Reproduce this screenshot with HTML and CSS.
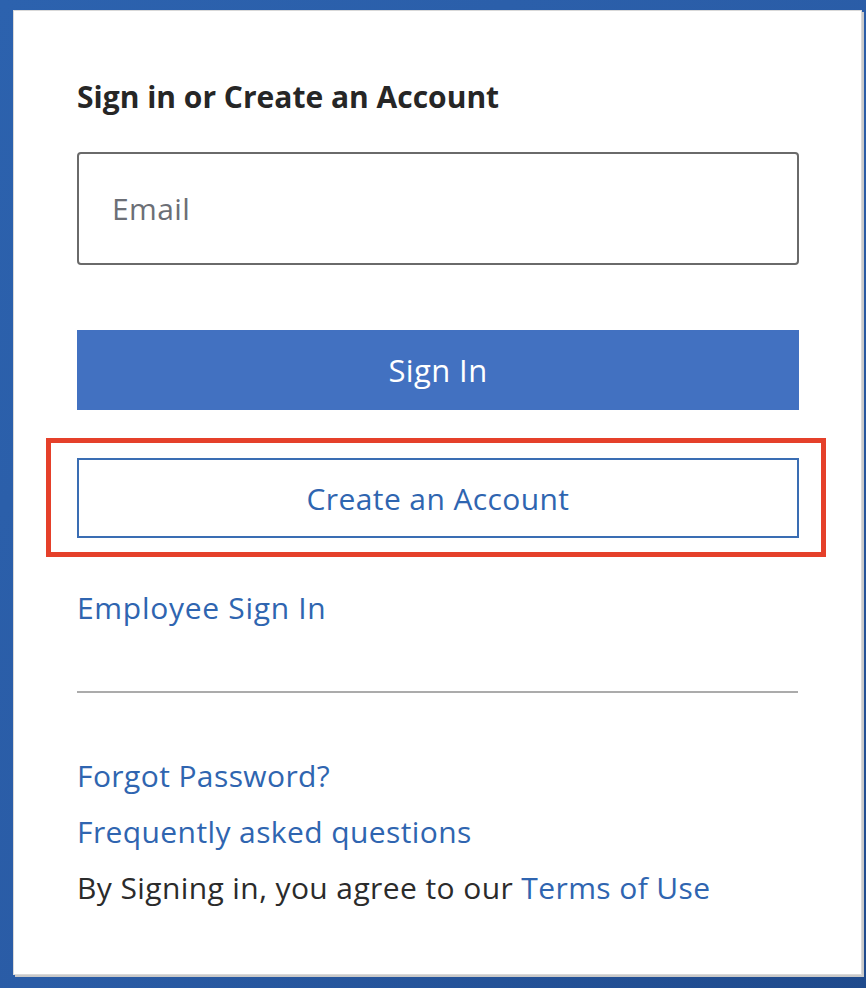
FILE: index.html
```html
<!DOCTYPE html>
<html lang="en">
<head>
    <meta charset="UTF-8">
    <meta name="viewport" content="width=device-width, initial-scale=1.0">
    <title>Sign In</title>
    <link rel="stylesheet" href="styles.css">
</head>
<body>
    <div class="card">
        <h2 class="title">Sign in or Create an Account</h2>
        <input type="email" class="email-input" placeholder="Email">
        <button class="btn-primary">Sign In</button>
        <div class="highlight">
            <button class="btn-outline">Create an Account</button>
        </div>
        <a href="#" class="link employee-link">Employee Sign In</a>
        <hr class="divider">
        <ul class="help-links">
            <li><a href="#" class="link">Forgot Password?</a></li>
            <li><a href="#" class="link">Frequently asked questions</a></li>
            <li>By Signing in, you agree to our <a href="#" class="link">Terms of Use</a></li>
        </ul>
    </div>
</body>
</html>
```

FILE: styles.css
```css
body {
    margin: 0;
    height: 988px;
    overflow: hidden;
    font-family: 'Open Sans', 'Noto Sans', sans-serif;
    background: linear-gradient(135deg, #2c62ae 0%, #2a5ca6 55%, #1f4a8c 100%); /* Textured blue */
}

.card {
    box-sizing: border-box;
    width: 849px;
    height: 965px;
    margin: 10px 0 0 13px;
    padding: 0 63px 0 63px;
    background-color: #ffffff;
    border: 1px solid #d9d9d9;
    box-shadow: 2px 2px 0 #c9c9c9;
    display: flex;
    flex-direction: column;
}

.title {
    margin: 66px 0 0 0;
    font-size: 30px;
    line-height: 40px;
    font-weight: 700;
    color: #262626;
}

.email-input {
    box-sizing: border-box;
    margin-top: 35px;
    width: 722px;
    height: 113px;
    padding: 0 33px;
    border: 2px solid #6a6a6a;
    border-radius: 4px;
    font-family: inherit;
    font-size: 30px;
    letter-spacing: 0.4px;
    color: #333;
    outline: none;
}

.email-input::placeholder {
    color: #6c6f76;
}

.btn-primary {
    margin-top: 65px;
    height: 80px;
    width: 722px;
    border: none;
    background-color: #4271c1; /* Brand blue */
    color: #ffffff;
    font-family: inherit;
    font-size: 31px;
    letter-spacing: 0.4px;
    cursor: pointer;
}

.highlight {
    margin: 28px -28px 0 -31px;
    padding: 15px 23px 14px 26px;
    border: 5px solid #e5402a; /* Red marker */
}

.btn-outline {
    display: block;
    width: 722px;
    height: 80px;
    border: 2px solid #3a6db3;
    background-color: #ffffff;
    color: #2f65b0;
    font-family: inherit;
    font-size: 30px;
    letter-spacing: 0.4px;
    cursor: pointer;
}

.link {
    color: #2f65b0;
    text-decoration: none;
}

.employee-link {
    margin-top: 31px;
    font-size: 30px;
    letter-spacing: 0.7px;
    line-height: 40px;
    align-self: flex-start;
}

.divider {
    width: 100%;
    margin: 63px 0 0 0;
    border: none;
    border-top: 2px solid #ababab;
}

.help-links {
    list-style: none;
    padding: 0;
    margin: 55px 0 0 0;
    font-size: 30px;
    letter-spacing: 0.4px;
    line-height: 56px;
    color: #2b2b2b;
}
```
